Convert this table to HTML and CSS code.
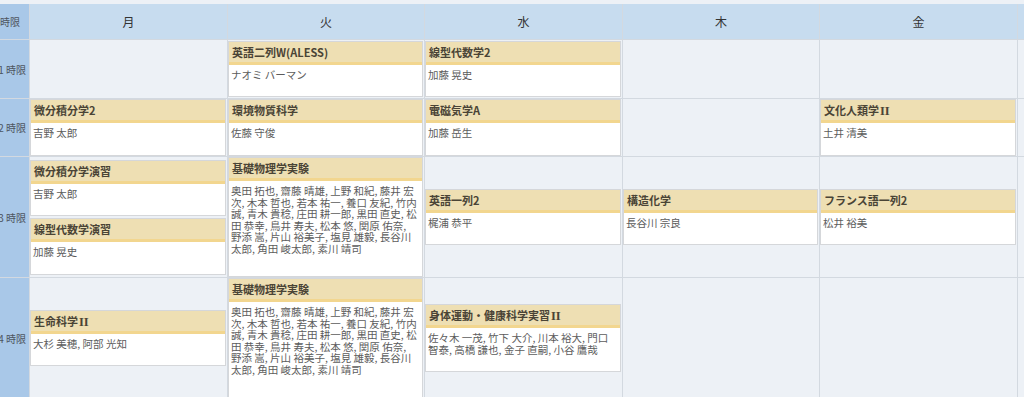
FILE: index.html
```html
<!DOCTYPE html>
<html lang="ja">
<head>
<meta charset="utf-8">
<title>時間割</title>
<link rel="stylesheet" href="styles.css">
</head>
<body>
<div class="viewport">
  <div class="timetable">
    <div class="th corner">時限</div>
    <div class="th">月</div>
    <div class="th">火</div>
    <div class="th">水</div>
    <div class="th">木</div>
    <div class="th">金</div>
    <div class="th">土</div>

    <div class="period">1 時限</div>
    <div class="cell"></div>
    <div class="cell">
      <div class="course"><div class="course-title">英語二列W(ALESS)</div><div class="course-staff">ナオミ バーマン</div></div>
    </div>
    <div class="cell">
      <div class="course"><div class="course-title">線型代数学2</div><div class="course-staff">加藤 晃史</div></div>
    </div>
    <div class="cell"></div>
    <div class="cell"></div>
    <div class="cell"></div>

    <div class="period">2 時限</div>
    <div class="cell">
      <div class="course"><div class="course-title">微分積分学2</div><div class="course-staff">吉野 太郎</div></div>
    </div>
    <div class="cell">
      <div class="course"><div class="course-title">環境物質科学</div><div class="course-staff">佐藤 守俊</div></div>
    </div>
    <div class="cell">
      <div class="course"><div class="course-title">電磁気学A</div><div class="course-staff">加藤 岳生</div></div>
    </div>
    <div class="cell"></div>
    <div class="cell">
      <div class="course"><div class="course-title">文化人類学<span class="roman">II</span></div><div class="course-staff">土井 清美</div></div>
    </div>
    <div class="cell"></div>

    <div class="period">3 時限</div>
    <div class="cell">
      <div class="course"><div class="course-title">微分積分学演習</div><div class="course-staff">吉野 太郎</div></div>
      <div class="course"><div class="course-title">線型代数学演習</div><div class="course-staff">加藤 晃史</div></div>
    </div>
    <div class="cell cell-fill">
      <div class="course course-grow"><div class="course-title">基礎物理学実験</div><div class="course-staff">奥田 拓也, 齋藤 晴雄, 上野 和紀, 藤井 宏<br>次, 木本 哲也, 若本 祐一, 養口 友紀, 竹内<br>誠, 青木 貴稔, 庄田 耕一郎, 黒田 直史, 松<br>田 恭幸, 鳥井 寿夫, 松本 悠, 関原 佑奈,<br>野添 嵩, 片山 裕美子, 塩見 雄毅, 長谷川<br>太郎, 角田 峻太郎, 素川 靖司</div></div>
    </div>
    <div class="cell">
      <div class="course"><div class="course-title">英語一列2</div><div class="course-staff">梶浦 恭平</div></div>
    </div>
    <div class="cell">
      <div class="course"><div class="course-title">構造化学</div><div class="course-staff">長谷川 宗良</div></div>
    </div>
    <div class="cell">
      <div class="course"><div class="course-title">フランス語一列2</div><div class="course-staff">松井 裕美</div></div>
    </div>
    <div class="cell"></div>

    <div class="period">4 時限</div>
    <div class="cell">
      <div class="course"><div class="course-title">生命科学<span class="roman">II</span></div><div class="course-staff">大杉 美穂, 阿部 光知</div></div>
    </div>
    <div class="cell cell-fill">
      <div class="course course-grow"><div class="course-title">基礎物理学実験</div><div class="course-staff">奥田 拓也, 齋藤 晴雄, 上野 和紀, 藤井 宏<br>次, 木本 哲也, 若本 祐一, 養口 友紀, 竹内<br>誠, 青木 貴稔, 庄田 耕一郎, 黒田 直史, 松<br>田 恭幸, 鳥井 寿夫, 松本 悠, 関原 佑奈,<br>野添 嵩, 片山 裕美子, 塩見 雄毅, 長谷川<br>太郎, 角田 峻太郎, 素川 靖司</div></div>
    </div>
    <div class="cell">
      <div class="course"><div class="course-title">身体運動・健康科学実習<span class="roman">II</span></div><div class="course-staff">佐々木 一茂, 竹下 大介, 川本 裕大, 門口<br>智泰, 高橋 謙也, 金子 直嗣, 小谷 鷹哉</div></div>
    </div>
    <div class="cell"></div>
    <div class="cell"></div>
    <div class="cell"></div>
  </div>
</div>
</body>
</html>
```

FILE: styles.css
```css
html, body {
  margin: 0;
  padding: 0;
  background: #edf1f6;
  font-family: "Noto Sans CJK JP", "Noto Sans", sans-serif;
}

.viewport {
  width: 1024px;
  height: 397px;
  overflow: hidden;
  padding-top: 4px;
  box-sizing: border-box;
}

.timetable {
  display: grid;
  grid-template-columns: 38px 197px 196px 197px 196px 197px 200px;
  grid-template-rows: 35px 58px 57px 120px 120px;
  gap: 1px;
  background: #d3d9e0;
  margin-left: -9px;
  width: max-content;
}

.th {
  background: #c7dcef;
  display: flex;
  align-items: center;
  justify-content: center;
  font-size: 12px;
  color: #333;
}

.corner,
.period {
  background: #a9c8e8;
  font-size: 10px;
  color: #4d5560;
}

.period {
  display: flex;
  align-items: center;
  justify-content: flex-end;
  padding-right: 3px;
  white-space: nowrap;
  overflow: hidden;
}

.cell {
  background: #edf1f6;
  display: flex;
  flex-direction: column;
  justify-content: center;
  gap: 2px;
  padding-right: 1px;
}

.cell-fill {
  justify-content: flex-start;
}

.course {
  background: #fff;
  border: 1px solid #d5d7da;
  display: flex;
  flex-direction: column;
}

.course-grow {
  flex: 1;
}

.course-title {
  background: #eedfb3;
  border-bottom: 3px solid #f2d68f;
  height: 20px;
  line-height: 20px;
  padding: 0 3px;
  font-size: 11px;
  font-weight: bold;
  color: #4a4436;
  white-space: nowrap;
  overflow: hidden;
}

.roman {
  font-family: "Liberation Serif", "DejaVu Serif", serif;
  font-size: 12.5px;
  margin-left: 1px;
}

.course-staff {
  padding: 4px 2px 16px 2px;
  font-size: 10.5px;
  line-height: 11.5px;
  color: #5c5c5c;
}
```
